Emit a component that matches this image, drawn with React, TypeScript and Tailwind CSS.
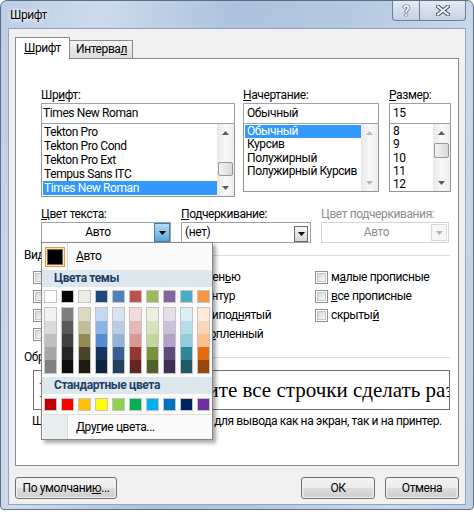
import React from 'react';

const THEME = ['#FFFFFF', '#000000', '#EEECE1', '#1F497D', '#4F81BD', '#C0504D', '#9BBB59', '#8064A2', '#4BACC6', '#F79646'];
const SHADES = [
  ['#F2F2F2', '#D9D9D9', '#BFBFBF', '#A6A6A6', '#808080'],
  ['#7F7F7F', '#595959', '#404040', '#262626', '#0D0D0D'],
  ['#DDD9C3', '#C4BD97', '#938953', '#494429', '#1D1B10'],
  ['#C6D9F0', '#8DB3E2', '#548DD4', '#17365D', '#0F243E'],
  ['#DBE5F1', '#B8CCE4', '#95B3D7', '#366092', '#244061'],
  ['#F2DCDB', '#E5B9B7', '#D99694', '#953734', '#632423'],
  ['#EBF1DD', '#D7E3BC', '#C3D69B', '#76923C', '#4F6128'],
  ['#E5E0EC', '#CCC1D9', '#B2A2C7', '#5F497A', '#3F3151'],
  ['#DBEEF3', '#B7DDE8', '#92CDDC', '#31859B', '#205867'],
  ['#FDEADA', '#FBD5B5', '#FAC08F', '#E36C09', '#974806'],
];
const STANDARD = ['#C00000', '#FF0000', '#FFC000', '#FFFF00', '#92D050', '#00B050', '#00B0F0', '#0070C0', '#002060', '#7030A0'];

const FONTS = ['Tekton Pro', 'Tekton Pro Cond', 'Tekton Pro Ext', 'Tempus Sans ITC', 'Times New Roman'];
const STYLES = ['Обычный', 'Курсив', 'Полужирный', 'Полужирный Курсив'];
const SIZES = ['8', '9', '10', '11', '12'];

function Tri({ up, color = '#000' }: { up?: boolean; color?: string }) {
  return (
    <svg width="7" height="4" viewBox="0 0 7 4">
      <polygon points={up ? '0,4 3.5,0 7,4' : '0,0 7,0 3.5,4'} fill={color} />
    </svg>
  );
}

function ScrollBar({ thumbTop, thumbH, dim }: { thumbTop?: number; thumbH?: number; dim?: boolean }) {
  const c = dim ? '#b9b9b9' : '#5a5a5a';
  return (
    <div className="w-[17px] h-full flex flex-col bg-gradient-to-r from-[#e9e9e9] via-[#f7f7f7] to-[#eeeeee]">
      <div className="h-[17px] flex items-center justify-center">
        <Tri up color={c} />
      </div>
      <div className="flex-1 px-[1px]">
        {thumbTop !== undefined && (
          <div
            className="rounded-[2px] border border-[#979797] bg-gradient-to-r from-[#f4f4f4] to-[#d8d8d8]"
            style={{ marginTop: thumbTop, height: thumbH }}
          />
        )}
      </div>
      <div className="h-[17px] flex items-center justify-center">
        <Tri color={c} />
      </div>
    </div>
  );
}

function ListBox({
  items,
  selected,
  h,
  row,
  pl,
  scroll,
}: {
  items: string[];
  selected: number;
  h: string;
  row: string;
  pl: string;
  scroll: React.ReactNode;
}) {
  return (
    <div className={`${h} border border-[#8f939a] bg-white flex`}>
      <div className="flex-1 pt-[1px] pl-[1px]">
        {items.map((it, i) => (
          <div
            key={it}
            className={`${row} ${pl} whitespace-nowrap ${i === selected ? 'bg-[#3399ff] text-white' : ''}`}
          >
            {it}
          </div>
        ))}
      </div>
      {scroll}
    </div>
  );
}

function CheckBox() {
  return (
    <div className="w-[13px] h-[13px] border border-[#8e8f8f] bg-white p-[1px] shrink-0">
      <div className="w-full h-full border border-[#c3c6ca] bg-gradient-to-br from-[#d6d6d6] to-[#fafafa]" />
    </div>
  );
}

function Check({ children }: { children: React.ReactNode }) {
  return (
    <div className="h-[19px] flex items-center gap-[3px] whitespace-nowrap">
      <CheckBox />
      <span>{children}</span>
    </div>
  );
}

function Button({ children, w }: { children: React.ReactNode; w: string }) {
  return (
    <div className={`${w} h-[22px] rounded-[3px] border border-[#707070] p-[1px]`}>
      <div className="w-full h-full rounded-[2px] bg-[linear-gradient(#f2f2f2_0%,#ebebeb_50%,#dddddd_51%,#cfcfcf_100%)] flex items-center justify-center">
        {children}
      </div>
    </div>
  );
}

function Swatch({ c }: { c: string }) {
  return <div className="w-[13px] h-[13px] border border-[#c5c5c5]" style={{ backgroundColor: c }} />;
}

export default function App() {
  return (
    <div className="w-[474px] h-[515px] bg-white relative overflow-hidden font-['Roboto',sans-serif] text-[12px] tracking-[-0.4px] text-black leading-[15px]">
      <div className="h-[510px] rounded-t-[7px] rounded-b-[4px] border border-[#5b6f87] bg-[linear-gradient(100deg,#bccee5_0%,#cddbec_18%,#adc2de_42%,#b3c7e0_60%,#c9d8ea_85%,#bfd0e6_100%)] flex flex-col">
        {/* title bar */}
        <div className="h-[27px] flex items-start">
          <span className="ml-[9px] mt-[7px] [text-shadow:0_0_6px_#ffffff,0_0_3px_#ffffff]">Шрифт</span>
          <div className="ml-auto mr-[7px] flex">
            <div className="w-[28px] h-[20px] rounded-bl-[4px] border border-t-0 border-[#6d7f96] bg-gradient-to-b from-[#e4ebf4] to-[#c4d3e5] flex items-center justify-center">
              <span className="text-[14px] font-bold text-[#f4f6f9] leading-[14px] [text-shadow:0_0_1px_#2c3e55,0_0_1px_#2c3e55,0_0_1px_#2c3e55]">?</span>
            </div>
            <div className="w-[46px] h-[20px] rounded-br-[4px] border border-t-0 border-l-0 border-[#6d7f96] bg-gradient-to-b from-[#e4ebf4] to-[#c4d3e5] flex items-center justify-center">
              <svg width="14" height="11" viewBox="0 0 14 11">
                <path d="M2 1.5 L12 9.5 M12 1.5 L2 9.5" stroke="#3b4d63" strokeWidth="4" strokeLinecap="square" />
                <path d="M2 1.5 L12 9.5 M12 1.5 L2 9.5" stroke="#f4f6f9" strokeWidth="2" strokeLinecap="square" />
              </svg>
            </div>
          </div>
        </div>

        {/* client area */}
        <div className="mx-[7px] h-[477px] bg-[#f0f0f0] border border-[#95a6ba] flex flex-col">
          <div className="h-[29px] flex items-end pl-[6px]">
            <div className="relative top-[1px] z-10 w-[55px] h-[22px] border border-b-0 border-[#898c95] bg-white pl-[8px] pt-[3px]">
              <u>Ш</u>рифт
            </div>
            <div className="w-[63px] h-[18px] border border-l-0 border-b-0 border-[#898c95] bg-gradient-to-b from-[#f3f3f3] to-[#dcdcdc] pl-[6px] pt-[1px]">
              Интерва<u>л</u>
            </div>
          </div>

          {/* tab panel */}
          <div className="ml-[6px] w-[444px] h-[408px] border border-[#898c95] bg-white flex flex-col">
            <div className="ml-[25px] mt-[29px] flex">
              <div className="w-[194px]">
                <div className="h-[15px]">Шр<u>и</u>фт:</div>
                <div className="h-[21px] border border-[#9da1a8] pl-[1px] flex items-center">Times New Roman</div>
                <ListBox
                  items={FONTS}
                  selected={4}
                  h="h-[73px] border-t-0"
                  row="h-[14px] leading-[14px]"
                  pl="pl-[1px]"
                  scroll={<ScrollBar thumbTop={21} thumbH={14} />}
                />
              </div>
              <div className="w-[136px] ml-[8px]">
                <div className="h-[15px]"><u>Н</u>ачертание:</div>
                <div className="h-[21px] border border-[#9da1a8] pl-[3px] flex items-center">Обычный</div>
                <ListBox
                  items={STYLES}
                  selected={0}
                  h="h-[68px] border-t-0"
                  row="h-[13.3px] leading-[13px]"
                  pl="pl-[2px]"
                  scroll={<ScrollBar dim />}
                />
              </div>
              <div className="w-[62px] ml-[10px]">
                <div className="h-[15px]"><u>Р</u>азмер:</div>
                <div className="h-[21px] border border-[#9da1a8] pl-[3px] flex items-center">15</div>
                <ListBox
                  items={SIZES}
                  selected={-1}
                  h="h-[68px] border-t-0"
                  row="h-[13.3px] leading-[13px]"
                  pl="pl-[2px]"
                  scroll={<ScrollBar thumbTop={2} thumbH={15} />}
                />
              </div>
            </div>

            {/* colour / underline row */}
            <div className="ml-[25px] mt-[10px] grid grid-cols-[130px_130px_128px] gap-x-[10px]">
              <div>
                <div className="h-[15px]"><u>Ц</u>вет текста:</div>
                <div className="h-[21px] border border-[#9da1a8] bg-white flex items-center">
                  <span className="flex-1 text-center">Авто</span>
                  <div className="w-[16px] h-[19px] border border-[#3c7fb1] bg-gradient-to-b from-[#b6dcf5] to-[#5ea3d8] flex items-center justify-center">
                    <Tri />
                  </div>
                </div>
              </div>
              <div>
                <div className="h-[15px]"><u>П</u>одчеркивание:</div>
                <div className="h-[21px] border border-[#9da1a8] bg-white flex items-center">
                  <span className="flex-1 pl-[3px]">(нет)</span>
                  <div className="mr-[2px] mt-[2px] w-[14px] h-[16px] border border-[#6b6b6b] bg-gradient-to-b from-[#f6f6f6] to-[#d6d6d6] flex items-center justify-center">
                    <Tri />
                  </div>
                </div>
              </div>
              <div className="text-[#8d8d8d]">
                <div className="h-[15px]">Цвет подчеркивания:</div>
                <div className="h-[21px] border border-[#d4d4d4] bg-white flex items-center">
                  <span className="flex-1 text-center">Авто</span>
                  <div className="mr-[1px] w-[16px] h-[17px] border border-[#d9d9d9] bg-[#f7f7f7] flex items-center justify-center">
                    <Tri color="#b3b3b3" />
                  </div>
                </div>
              </div>
            </div>

            {/* effects */}
            <div className="ml-[8px] w-[426px] mt-[5px]">
              <div className="h-[15px] flex items-center gap-[4px]">
                <span>Видоизменение</span>
                <div className="flex-1 h-[1px] bg-[#d5dde5]" />
              </div>
              <div className="mt-[5px] pl-[9px] grid grid-cols-[150px_132px_1fr]">
                <div>
                  <Check>з<u>а</u>черкнутый</Check>
                  <Check>дво<u>й</u>ное зачеркивание</Check>
                  <Check>на<u>д</u>строчный</Check>
                  <Check>под<u>с</u>трочный</Check>
                </div>
                <div>
                  <Check>с тен<u>ь</u>ю</Check>
                  <Check><u>к</u>онтур</Check>
                  <Check>припод<u>н</u>ятый</Check>
                  <Check>ут<u>о</u>пленный</Check>
                </div>
                <div>
                  <Check>м<u>а</u>лые прописные</Check>
                  <Check><u>в</u>се прописные</Check>
                  <Check>скрыты<u>й</u></Check>
                </div>
              </div>

              <div className="mt-[6px] h-[15px] flex items-center gap-[4px]">
                <span>Образец</span>
                <div className="flex-1 h-[1px] bg-[#d5dde5]" />
              </div>
              <div className="mt-[5px] ml-[9px] w-[417px] h-[40px] border border-[#6e6e6e] bg-white overflow-hidden flex items-center pl-[5px]">
                <span className="whitespace-nowrap font-['Liberation_Serif',serif] text-[21px] tracking-normal leading-[24px]">
                  Вы, наверняка, хотите все строчки сделать разными
                </span>
              </div>
              <div className="mt-[4px] ml-[8px] h-[15px] whitespace-nowrap">
                Шрифт TrueType. Он используется для вывода как на экран, так и на принтер.
              </div>
            </div>
          </div>

          {/* dialog buttons */}
          <div className="mt-[11px] px-[6px] flex">
            <Button w="w-[102px]">По умолчани<u>ю</u>...</Button>
            <div className="ml-auto flex gap-[10px]">
              <Button w="w-[74px]">ОК</Button>
              <Button w="w-[74px]">Отмена</Button>
            </div>
          </div>
        </div>
      </div>

      {/* colour picker dropdown */}
      <div className="absolute left-[41px] top-[242px] z-20 w-[172px] h-[198px] border border-[#868686] bg-[#fafafa] shadow-[3px_3px_4px_rgba(0,0,0,0.35)] flex flex-col">
        <div className="h-[27px] flex items-center">
          <div className="ml-[3px] w-[20px] h-[20px] border border-[#eb9a3c] bg-[#ffe3a6] p-[1px]">
            <div className="w-full h-full bg-black border border-[#6a6a6a]" />
          </div>
          <div className="ml-[2px] h-full w-[2px] border-l border-[#dadada] bg-white" />
          <span className="ml-[7px]"><u>А</u>вто</span>
        </div>
        <div className="h-[17px] leading-[17px] bg-[#dde7ee] pl-[12px] font-bold text-[#213f66]">Цвета темы</div>
        <div className="mt-[3px] pl-[2px] flex gap-[4px]">
          {THEME.map((c) => (
            <Swatch key={c} c={c} />
          ))}
        </div>
        <div className="mt-[4px] pl-[2px] flex gap-[4px]">
          {SHADES.map((col, i) => (
            <div key={i} className="w-[13px] border border-[#c5c5c5] flex flex-col">
              {col.map((c) => (
                <div key={c} className="h-[13px]" style={{ backgroundColor: c }} />
              ))}
            </div>
          ))}
        </div>
        <div className="mt-[3px] h-[17px] leading-[17px] bg-[#dde7ee] pl-[12px] font-bold text-[#213f66]">Стандартные цвета</div>
        <div className="mt-[4px] pl-[2px] flex gap-[4px]">
          {STANDARD.map((c) => (
            <Swatch key={c} c={c} />
          ))}
        </div>
        <div className="mt-[3px] mx-[1px] h-[1px] bg-[#dedede]" />
        <div className="flex-1 flex items-stretch">
          <div className="ml-[1px] w-[24px] bg-[#e8edf0]" />
          <div className="w-[2px] border-l border-[#dadada] bg-white" />
          <span className="ml-[7px] self-center">Дру<u>г</u>ие цвета...</span>
        </div>
      </div>
    </div>
  );
}
